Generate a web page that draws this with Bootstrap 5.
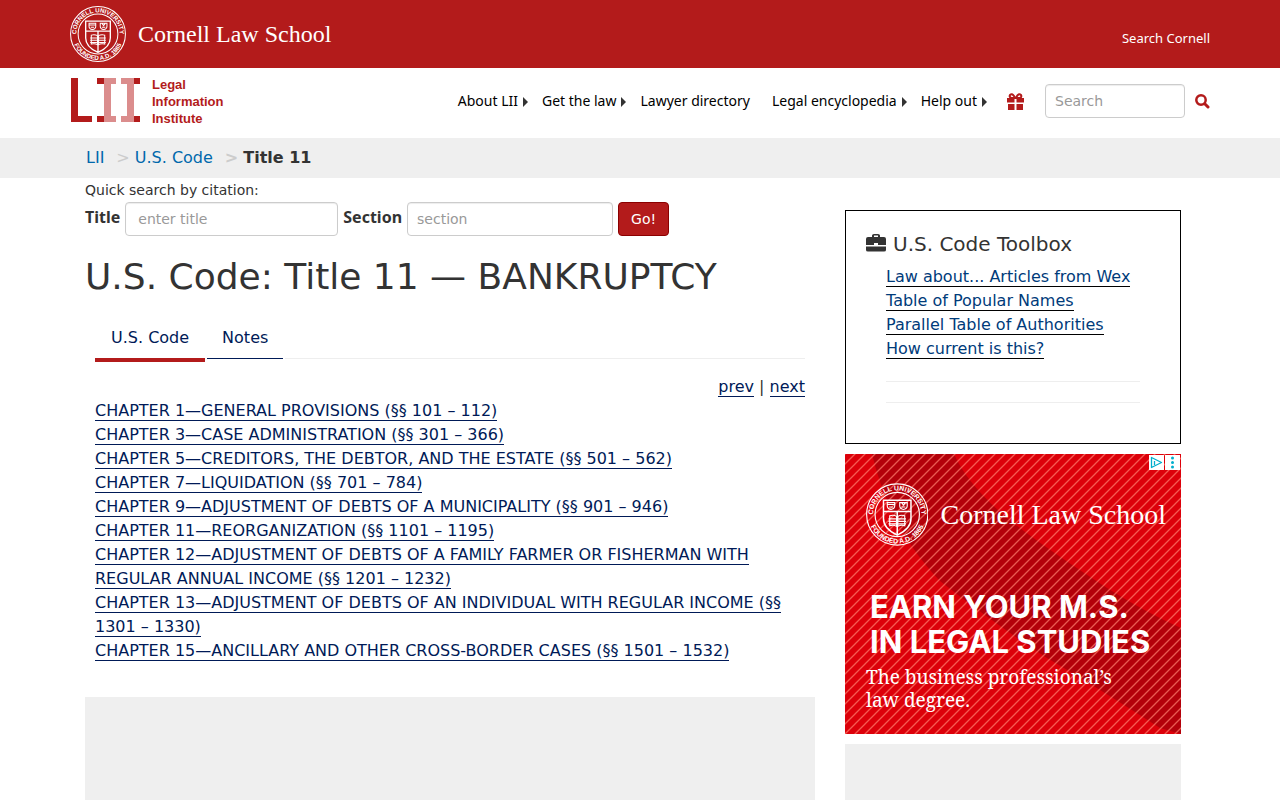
<!DOCTYPE html>
<html lang="en">
<head>
<meta charset="utf-8">
<meta name="viewport" content="width=device-width, initial-scale=1">
<title>U.S. Code: Title 11 — BANKRUPTCY | LII</title>
<link href="https://cdn.jsdelivr.net/npm/bootstrap@5.3.0/dist/css/bootstrap.min.css" rel="stylesheet">
<style>
  body { font-family: "DejaVu Sans", sans-serif; font-size: 16px; line-height: 24px; color: #333; background: #fff; }
  .brand-bar { background: #b31b1b; min-height: 68px; }
  .school { font-family: "Liberation Serif", serif; font-size: 24px; line-height: 28px; }
  .school-ad { font-size: 28px; }
  .top-link { font-family: "Noto Sans", sans-serif; font-size: 13px; }
  .site-bar { min-height: 70px; padding-bottom: 4px; }
  .lii-name { font-family: "Liberation Sans", sans-serif; font-size: 13px; line-height: 17px; color: #b31b1b; }
  .site-nav { font-family: "Noto Sans", sans-serif; font-size: 14px; gap: 14px; }
  .site-nav a { color: #000; }
  .has-menu::after { content: ""; display: inline-block; margin-left: 5px; border: 5px solid transparent; border-left-color: #333; border-right: 0; vertical-align: -1px; }
  .gift { width: 40px; height: 40px; color: #b31b1b; }
  .field { font-size: 14px; height: 34px; padding: 6px 12px; border: 1px solid #ccc; border-radius: 4px; color: #555; box-shadow: inset 0 1px 1px rgba(0,0,0,.075); }
  .field::placeholder { color: #999; }
  .site-search { width: 140px; padding: 6px 9px; }
  .search-form { gap: 10px; padding-left: 10px; }
  .find { color: #b31b1b; }
  .crumb-bar { background: #efefef; min-height: 40px; }
  .crumb-bar a { color: #0068ac; }
  .crumb-bar li + li::before { content: ">"; color: #ccc; padding: 0 5px 0 12px; }
  .main-row { --bs-gutter-x: 30px; }
  .quick { font-size: 14px; }
  .quick-row { gap: 5px; }
  .quick-label { font-family: "Noto Sans", sans-serif; font-weight: 700; line-height: 30px; }
  .f-title { width: 213px; }
  .f-section { width: 206px; padding: 6px 9px; }
  .go { background: #b31b1b; border: 1px solid #8b0000; border-radius: 4px; color: #fff; height: 34px; width: 51px; font-size: 14px; line-height: 20px; }
  h1 { font-size: 36px; line-height: 40px; margin: 21px 0 20px; font-weight: 400; }
  .code-pane { padding: 0 10px 34px; }
  .code-tabs { gap: 2px; border: 0; margin-bottom: 13px; }
  .code-tabs::after { content: ""; flex: 1; height: 42px; border-bottom: 1px solid #eee; }
  .code-tabs button { background: none; border: 0; border-bottom: 1px solid #001a57; padding: 9px 15px; height: 42px; color: #001a57; }
  .code-tabs button.active { border-bottom: 4px solid #b31b1b; height: 45px; padding: 9px 16px 8px; }
  .ruled a { text-decoration: none; border-bottom: 1px solid #001a57; color: #001a57; }
  .toolbox { border: 1px solid #000; padding: 21px 20px 20px; min-height: 233px; }
  .toolbox h2 { font-size: 20px; line-height: 24px; font-weight: 400; gap: 7px; margin-bottom: 9px; }
  .toolbox a { border-color: #000; color: #003b7a; }
  .toolbox hr { margin: 20px 0; border-color: #bbb; }
  .toolbox ul { margin-bottom: 18px; }
  .side { max-width: 336px; }
  .slot { background: #efefef; }
  .ad { background: #dc000a; height: 280px; margin: 10px 0; }
  .ad-body { padding: 28px 15px 20px 21px; }
  .ad-head { font-family: Inter, "Liberation Sans", sans-serif; font-weight: 700; font-size: 31px; line-height: 35px; margin: 42px 0 7px 4px; }
  .ad-sub { font-family: "Noto Serif", "Liberation Serif", serif; font-size: 19px; line-height: 23px; }
  .ad-tag { gap: 1px; padding: 1px 1px 0 0; }
</style>
</head>
<body class="d-flex flex-column min-vh-100">

<div class="brand-bar d-flex">
  <div class="container-xl px-0 d-flex align-items-center justify-content-between">
    <a href="#" class="d-flex align-items-center text-white text-decoration-none">
      <svg width="56" height="56" viewBox="0 0 100 100" class="me-2" role="img" aria-label="Cornell seal">
        <defs>
          <path id="arc-top" d="M16.500 69.400A38.700 38.700 0 1 1 83.500 69.400"/>
          <path id="arc-bottom" d="M6.500 35.500A46 46 0 1 0 93.500 35.500"/>
        </defs>
        <g id="seal">
          <g fill="none" stroke="#fff" stroke-width="1.800">
            <circle cx="50" cy="50" r="49"/><circle cx="50" cy="50" r="35.500"/>
            <path stroke-width="2.400" d="M28 27H72V57Q72 73 50 83Q28 73 28 57ZM28 45H72M50 45V83"/>
            <path d="M34 31H46V36Q46 41 40 42Q34 41 34 36ZM54 31H66V36Q66 41 60 42Q54 41 54 36ZM34 34H46M37 38H43M57 31L60 35L63 31M57 38H63"/>
            <path d="M49 53Q44 50 38 52V68Q44 66 49 69ZM51 53Q56 50 62 52V68Q56 66 51 69ZM36 57H48M36 61H48M36 65H48M52 57H64M52 61H64M52 65H64"/>
          </g>
          <g fill="#fff" font-family="Liberation Sans, sans-serif" font-weight="700" font-size="11" text-anchor="middle">
            <text><textPath href="#arc-top" startOffset="50%">CORNELL UNIVERSITY</textPath></text>
            <text><textPath href="#arc-bottom" startOffset="50%">FOUNDED A.D. 1865</textPath></text>
          </g>
        </g>
      </svg>
      <span class="school ms-1">Cornell Law School</span>
    </a>
    <a href="#" class="top-link text-white text-decoration-none pt-2">Search Cornell</a>
  </div>
</div>

<header class="site-bar d-flex">
  <div class="container-xl px-0 d-flex align-items-center">
    <a href="#" class="d-flex align-items-center text-decoration-none me-auto">
      <svg width="70" height="46" viewBox="0 0 70 46" role="img" aria-label="LII">
        <path fill="#b31b1b" d="M1 0H8V38H22V44H1ZM27 0H34V6H27ZM27 38H34V44H27ZM64 0H70V6H64ZM64 38H70V44H64Z"/>
        <path fill="#db8d8d" d="M34 0H46V6H41V38H46V44H34ZM51 0H64V44H51V38H57V6H51Z"/>
      </svg>
      <span class="lii-name fw-bold ms-2 ps-1">Legal<br>Information<br>Institute</span>
    </a>
    <nav class="d-flex align-items-center">
      <ul class="site-nav list-unstyled d-flex flex-wrap mb-0 me-2">
        <li><a class="has-menu text-decoration-none" href="#">About LII</a></li>
        <li><a class="has-menu text-decoration-none" href="#">Get the law</a></li>
        <li class="me-2"><a class="text-decoration-none" href="#">Lawyer directory</a></li>
        <li><a class="has-menu text-decoration-none" href="#">Legal encyclopedia</a></li>
        <li><a class="has-menu text-decoration-none" href="#">Help out</a></li>
      </ul>
      <a href="#" class="gift d-flex align-items-center justify-content-center" aria-label="Donate">
        <svg width="17" height="17" viewBox="0 0 17 17"><path fill="currentColor" d="M0 5H7.500V9.500H0ZM9.500 5H17V9.500H9.500ZM1 11H7.500V17H1ZM9.500 11H16V17H9.500Z"/><path fill="none" stroke="currentColor" stroke-width="2" d="M8 5H4Q2 4 3 2Q5 0 7 3ZM9 5H13Q15 4 14 2Q12 0 10 3Z"/></svg>
      </a>
    </nav>
    <form class="search-form d-flex align-items-center" role="search">
      <input type="search" class="field site-search" placeholder="Search" aria-label="Search">
      <button type="button" class="find btn p-0 border-0" aria-label="Go search">
        <svg width="15" height="15" viewBox="0 0 15 15" fill="none" stroke="currentColor"><circle cx="6" cy="6" r="4.700" stroke-width="2.500"/><path stroke-width="3" stroke-linecap="round" d="M10 10L13 13"/></svg>
      </button>
    </form>
  </div>
</header>

<nav class="crumb-bar d-flex" aria-label="breadcrumb">
  <div class="container-xl px-0 d-flex align-items-center">
    <ol class="list-unstyled d-flex mb-0 ps-3">
      <li><a class="text-decoration-none" href="#">LII</a></li>
      <li><a class="text-decoration-none" href="#">U.S. Code</a></li>
      <li class="fw-bold" aria-current="page">Title 11</li>
    </ol>
  </div>
</nav>

<div class="container-xl px-0 flex-grow-1 d-flex flex-column">
  <div class="main-row row flex-grow-1 mx-0">
    <main class="col-lg-8 d-flex flex-column">
      <form>
        <div class="quick">Quick search by citation:</div>
        <div class="quick-row d-flex flex-wrap">
          <label class="quick-label" for="t">Title</label>
          <input id="t" type="text" class="field f-title" placeholder="enter title">
          <label class="quick-label" for="s">Section</label>
          <input id="s" type="text" class="field f-section" placeholder="section">
          <button type="button" class="go p-0">Go!</button>
        </div>
      </form>
      <h1>U.S. Code: Title 11 — BANKRUPTCY</h1>
      <div class="code-pane">
        <div class="code-tabs d-flex align-items-start" role="tablist">
          <button type="button" class="active" role="tab" aria-selected="true">U.S. Code</button>
          <button type="button" role="tab" aria-selected="false">Notes</button>
        </div>
        <div class="ruled text-end"><a href="#">prev</a> | <a href="#">next</a></div>
        <ol class="ruled list-unstyled mb-0">
          <li><a href="#">CHAPTER 1—GENERAL PROVISIONS (§§ 101 – 112)</a></li>
          <li><a href="#">CHAPTER 3—CASE ADMINISTRATION (§§ 301 – 366)</a></li>
          <li><a href="#">CHAPTER 5—CREDITORS, THE DEBTOR, AND THE ESTATE (§§ 501 – 562)</a></li>
          <li><a href="#">CHAPTER 7—LIQUIDATION (§§ 701 – 784)</a></li>
          <li><a href="#">CHAPTER 9—ADJUSTMENT OF DEBTS OF A MUNICIPALITY (§§ 901 – 946)</a></li>
          <li><a href="#">CHAPTER 11—REORGANIZATION (§§ 1101 – 1195)</a></li>
          <li><a href="#">CHAPTER 12—ADJUSTMENT OF DEBTS OF A FAMILY FARMER OR FISHERMAN WITH REGULAR ANNUAL INCOME (§§ 1201 – 1232)</a></li>
          <li><a href="#">CHAPTER 13—ADJUSTMENT OF DEBTS OF AN INDIVIDUAL WITH REGULAR INCOME (§§ 1301 – 1330)</a></li>
          <li><a href="#">CHAPTER 15—ANCILLARY AND OTHER CROSS-BORDER CASES (§§ 1501 – 1532)</a></li>
        </ol>
      </div>
      <div class="slot flex-grow-1"></div>
    </main>

    <aside class="col-lg-4 d-flex flex-column pt-4">
      <section class="toolbox ruled side w-100 mt-2">
        <h2 class="d-flex align-items-center">
          <svg width="20" height="20" viewBox="0 0 20 20" aria-hidden="true"><path fill="#333" d="M6 3V1.500Q6 0 8 0H12Q14 0 14 1.500V3H18Q20 3 20 5V11H12V9H8V11H0V5Q0 3 2 3ZM8 3H12V1.500H8ZM0 12.500H20V16Q20 17.500 18 17.500H2Q0 17.500 0 16Z"/></svg>
          U.S. Code Toolbox
        </h2>
        <div class="px-3 mx-1">
          <ul class="list-unstyled">
            <li><a href="#">Law about... Articles from Wex</a></li>
            <li><a href="#">Table of Popular Names</a></li>
            <li><a href="#">Parallel Table of Authorities</a></li>
            <li><a href="#">How current is this?</a></li>
          </ul>
          <hr><hr>
        </div>
      </section>

      <section class="ad side w-100 position-relative overflow-hidden text-white">
        <svg class="position-absolute top-0 start-0 w-100 h-100" viewBox="0 0 336 280" preserveAspectRatio="xMinYMin slice" aria-hidden="true">
          <defs><pattern id="hatch" width="10" height="10" patternUnits="userSpaceOnUse"><path d="M-1 11L11 -1M-1 1L1 -1M9 11L11 9" stroke="#ff8070" stroke-opacity=".700" stroke-width="1.300"/></pattern></defs>
          <path fill="#b3000a" d="M27 0H109Q122 30 162 64Q194 90 262 134Q300 158 336 174V280L315 274Q250 232 202 204Q150 170 95 127Q45 75 27 0Z"/>
          <rect width="336" height="280" fill="url(#hatch)"/>
        </svg>
        <div class="ad-tag position-absolute top-0 end-0 d-flex">
          <svg width="15" height="15" viewBox="0 0 15 15"><path fill="#fff" d="M0 0H15V15H0Z"/><path fill="none" stroke="#00aecd" stroke-width="1.300" stroke-linejoin="round" d="M2.500 2.500L12.500 7.500L2.500 12.500ZM5.500 6V10"/></svg>
          <svg width="15" height="15" viewBox="0 0 15 15"><path fill="#fff" d="M0 0H15V15H0Z"/><g fill="#00aecd"><circle cx="7.500" cy="3" r="1.500"/><circle cx="7.500" cy="7.500" r="1.500"/><circle cx="7.500" cy="12" r="1.500"/></g></svg>
        </div>
        <div class="ad-body position-relative">
          <div class="d-flex align-items-center">
            <svg width="65" height="65" viewBox="0 0 100 100" class="me-2" role="img" aria-label="Cornell seal"><use href="#seal"/></svg>
            <span class="school school-ad text-nowrap ms-1">Cornell Law School</span>
          </div>
          <div class="ad-head text-nowrap">EARN YOUR M.S.<br>IN LEGAL STUDIES</div>
          <div class="ad-sub">The business professional’s<br>law degree.</div>
        </div>
      </section>
      <div class="slot side w-100 flex-grow-1"></div>
    </aside>
  </div>
</div>
<script src="https://cdn.jsdelivr.net/npm/bootstrap@5.3.0/dist/js/bootstrap.bundle.min.js"></script>
</body>
</html>
